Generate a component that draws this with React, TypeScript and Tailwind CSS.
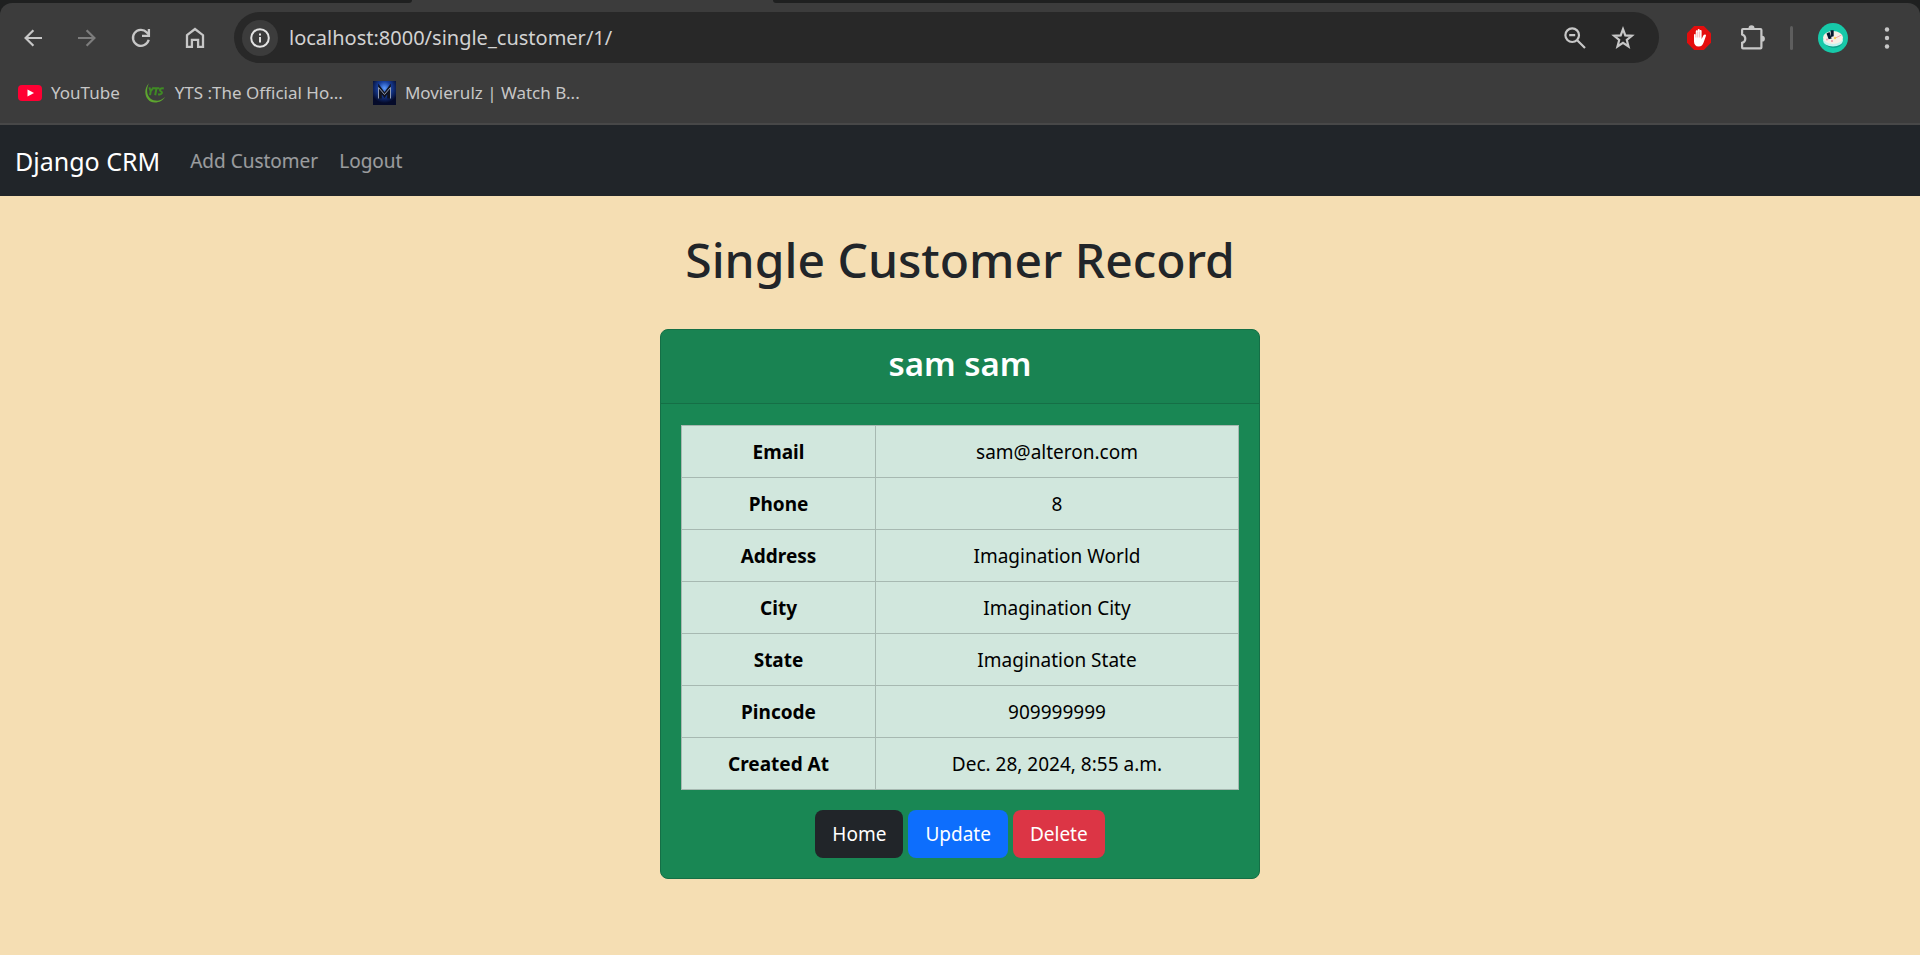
import type { ReactNode } from "react";

const record = [
  { label: "Email", value: "sam@alteron.com" },
  { label: "Phone", value: "8" },
  { label: "Address", value: "Imagination World" },
  { label: "City", value: "Imagination City" },
  { label: "State", value: "Imagination State" },
  { label: "Pincode", value: "909999999" },
  { label: "Created At", value: "Dec. 28, 2024, 8:55 a.m." },
];

function IconButton({ label, children }: { label: string; children: ReactNode }) {
  return (
    <button type="button" aria-label={label} className="flex size-9 shrink-0 items-center justify-center rounded-full">
      {children}
    </button>
  );
}

function BackIcon() {
  return (
    <svg viewBox="0 0 18 18" className="size-[18px]" fill="none" stroke="#c7c7c7" strokeWidth="2.2">
      <path d="M18 9H2M9.4 1.2 1.6 9l7.8 7.8" />
    </svg>
  );
}

function ForwardIcon() {
  return (
    <svg viewBox="0 0 18 18" className="size-[18px]" fill="none" stroke="#7d7d7d" strokeWidth="2.2">
      <path d="M0 9h16M8.600 1.200 16.400 9l-7.800 7.800" />
    </svg>
  );
}

function ReloadIcon() {
  return (
    <svg viewBox="0 0 20 20" className="size-5" fill="none" stroke="#c7c7c7" strokeWidth="2.300">
      <path d="M17.700 11.800A8 8 0 1 1 15.800 4.400L18 6.600" />
      <path d="M17.900 1v6.900H11" />
    </svg>
  );
}

function HomeIcon() {
  return (
    <svg viewBox="0 0 20 22" className="h-[22px] w-5" fill="none" stroke="#c7c7c7" strokeWidth="2.300">
      <path d="M2 8.200 10 2l8 6.200v11.700h-4.900v-7.100H6.900v7.100H2z" />
    </svg>
  );
}

function InfoIcon() {
  return (
    <svg viewBox="0 0 20 20" className="size-5" fill="none" stroke="#e3e3e3" strokeWidth="2">
      <circle cx="10" cy="10" r="8.800" />
      <path d="M10 9v5.400M10 5.400v2" />
    </svg>
  );
}

function ZoomOutIcon() {
  return (
    <svg viewBox="0 0 22 22" className="size-[22px]" fill="none" stroke="#c7c7c7" strokeWidth="2.200">
      <circle cx="8.200" cy="8.200" r="6.800" />
      <path d="M5.200 8.200h6M13.200 13.200l7.800 7.800" />
    </svg>
  );
}

function StarIcon() {
  return (
    <svg viewBox="0 0 24 24" className="size-6" fill="none" stroke="#c7c7c7" strokeWidth="2.200">
      <path d="m12 3.200 2.300 6.200 6.600.4-5.100 4.200 1.700 6.400-5.500-3.600-5.500 3.600L8.200 14 3.100 9.800l6.600-.4z" />
    </svg>
  );
}

function BlockerIcon() {
  return (
    <svg viewBox="0 0 24 24" className="size-6">
      <path d="M7.200 0h9.600L24 7.200v9.600L16.800 24H7.200L0 16.800V7.200z" fill="#e40d0d" />
      <path
        d="M7 9.200c0-1.500 1.800-1.500 1.800 0V5.300c0-1.500 1.900-1.500 1.900 0V4c0-1.500 2-1.500 2 0v1c0-1.400 1.900-1.400 1.900 0v8l1.700-3.500c.8-1.600 3.300-1.300 2.600.5l-2.200 6.200c-.9 2.700-2.300 4.300-5 4.300C8.500 20.500 7 18.400 7 15.500z"
        fill="#fff"
      />
      <path d="M8.850 6.500v5M10.750 5.500v6M12.650 5.500v6" stroke="#ee7070" strokeWidth=".5" />
    </svg>
  );
}

function ExtensionsIcon() {
  return (
    <svg viewBox="0 0 26 26" className="size-[26px]" fill="none" stroke="#c7c7c7" strokeWidth="2.200">
      <path d="M2.100 4.900q0-.9.900-.9h17.500q.9 0 .9.900v17.600q0 .9-.9.900H3q-.9 0-.9-.9v-4.600q3.200-1 3.200-4.200T2.100 9.500z" />
      <path d="M8.500 3.200a3 3 0 0 1 6 0zM22 10.800a2.900 2.900 0 0 1 0 5.800z" fill="#c7c7c7" stroke="none" />
    </svg>
  );
}

function AvatarIcon() {
  return (
    <svg viewBox="0 0 30 30" className="size-[30px]">
      <circle cx="15" cy="15" r="15" fill="#17c9a9" />
      <path d="M6 17c0 9 16 11 19 2z" fill="#0e9c88" />
      <ellipse cx="15" cy="17.500" rx="10" ry="6" fill="#c5f3f0" />
      <ellipse cx="15" cy="14.500" rx="10" ry="6.500" fill="#f7efe6" />
      <path d="m8.500 10.500 3-1.500 2.200 6.500-3 .8z" fill="#07172e" />
      <path d="M12.500 7.200h3.200v6L13 14z" fill="#07172e" />
      <path d="m16.500 15.500 7-3.500" stroke="#f3a6ad" strokeWidth="1" />
      <circle cx="9" cy="16.500" r="1" fill="#f49cb4" />
      <circle cx="17" cy="15" r="1.200" fill="#f8cf5b" />
      <circle cx="14" cy="18" r="1" fill="#f28a9c" />
    </svg>
  );
}

function MenuIcon() {
  return (
    <svg viewBox="0 0 6 22" className="h-[22px] w-1.5" fill="#c7c7c7">
      <circle cx="3" cy="2.500" r="2.200" />
      <circle cx="3" cy="11" r="2.200" />
      <circle cx="3" cy="19.500" r="2.200" />
    </svg>
  );
}

function YouTubeIcon() {
  return (
    <svg viewBox="0 0 24 16" className="h-4 w-6 shrink-0">
      <rect width="24" height="16" rx="4" fill="#ff0033" />
      <path d="m9.500 4.500 6.500 3.500-6.500 3.500z" fill="#fff" />
    </svg>
  );
}

function YtsIcon() {
  return (
    <svg viewBox="0 0 22 22" className="size-[22px] shrink-0">
      <path d="M5 1.200C-2 8 1.500 20.500 11 20.500c4.500 0 8-2.200 10-5.500-3 2.800-6 4-9.500 3.600C3.500 17.800 1 9 5 1.200z" fill="#5da52f" />
      <g fill="none" stroke="#3f8a24" strokeWidth="2">
        <path d="m5.300 5.400 1.400 3.800 3-3.800M6.700 9.200 6 13.200M9.800 6.200h5.600M12.500 6.200 11.200 13.200M19.800 6.400c-3.700-.8-4.800 1.700-2.900 2.900 2.200 1.200.8 3.700-2.800 2.900" />
      </g>
    </svg>
  );
}

function MovieIcon() {
  return (
    <svg viewBox="0 0 23 24" className="h-6 w-[23px] shrink-0">
      <defs>
        <radialGradient id="movie-glow" cx=".5" cy=".3" r=".62">
          <stop offset="0" stopColor="#5c9bff" />
          <stop offset=".45" stopColor="#173f9e" />
          <stop offset="1" stopColor="#050b2a" />
        </radialGradient>
      </defs>
      <rect width="23" height="24" fill="url(#movie-glow)" />
      <path d="M7 17.500V8l4.500 6L16 8v9.500" fill="none" stroke="#11141f" strokeWidth="3.600" />
      <path d="M5.500 17.500v-11l6 7 6-7v11" fill="none" stroke="#8f9ab3" strokeWidth="1" />
    </svg>
  );
}

function Bookmark({ icon, children }: { icon: ReactNode; children: ReactNode }) {
  return (
    <a href="#" className="flex items-center gap-[9px] text-[17px] leading-6 whitespace-nowrap text-[#c7c7c7]">
      {icon}
      {children}
    </a>
  );
}

function BrowserChrome() {
  return (
    <header className="bg-[#1f2020]">
      <div className="flex h-[3px] bg-[#3c3c3c]">
        <div className="w-[412px] rounded-br-lg bg-[#1f2020]" />
        <div className="w-[361px]" />
        <div className="grow rounded-bl-lg bg-[#1f2020]" />
      </div>
      <div className="rounded-t-xl border-b-2 border-[#484848] bg-[#3c3c3c]">
        <div className="flex items-center px-[15px] pt-[9px]">
          <div className="flex gap-[18px]">
            <IconButton label="Back"><BackIcon /></IconButton>
            <IconButton label="Forward"><ForwardIcon /></IconButton>
            <IconButton label="Reload"><ReloadIcon /></IconButton>
            <IconButton label="Home"><HomeIcon /></IconButton>
          </div>
          <div className="ml-[21px] flex h-[51px] grow items-center rounded-full bg-[#282828] pr-[18px] pl-2">
            <button type="button" aria-label="Site information" className="flex size-9 shrink-0 items-center justify-center rounded-full bg-[#3c3c3c]">
              <InfoIcon />
            </button>
            <input
              aria-label="Address"
              defaultValue="localhost:8000/single_customer/1/"
              className="ml-[11px] min-w-0 grow bg-transparent text-xl leading-7 text-[#d2d2d2] outline-none"
            />
            <div className="flex gap-3">
              <IconButton label="Zoom"><ZoomOutIcon /></IconButton>
              <IconButton label="Bookmark this page"><StarIcon /></IconButton>
            </div>
          </div>
          <div className="ml-[22px] flex items-center">
            <div className="flex gap-[18px]">
              <IconButton label="Ad blocker"><BlockerIcon /></IconButton>
              <IconButton label="Extensions"><ExtensionsIcon /></IconButton>
            </div>
            <div className="ml-[19px] h-6 w-[3px] rounded-full bg-[#5e5e5e]" />
            <div className="ml-[22px] flex gap-[18px]">
              <IconButton label="Profile"><AvatarIcon /></IconButton>
              <IconButton label="Menu"><MenuIcon /></IconButton>
            </div>
          </div>
        </div>
        <nav aria-label="Bookmarks" className="flex h-[60px] items-center px-[18px]">
          <Bookmark icon={<YouTubeIcon />}>YouTube</Bookmark>
          <div className="ml-6 flex gap-[30px]">
            <Bookmark icon={<YtsIcon />}>YTS :The Official Ho...</Bookmark>
            <Bookmark icon={<MovieIcon />}>Movierulz | Watch B...</Bookmark>
          </div>
        </nav>
      </div>
    </header>
  );
}

export default function App() {
  return (
    <div className="flex min-h-screen flex-col bg-[#f5deb3] font-['Noto_Sans','Open_Sans',sans-serif] text-[#212529]">
      <BrowserChrome />
      <nav aria-label="Main" className="flex h-[71px] items-center bg-[#212529] px-[15px]">
        <a href="#" className="text-[25px] leading-9 text-white">Django CRM</a>
        <a href="#" className="ml-[30px] text-[19px] leading-7 text-white/55">Add Customer</a>
        <a href="#" className="ml-[21px] text-[19px] leading-7 text-white/55">Logout</a>
      </nav>
      <main className="flex flex-col items-center px-4 pb-10 text-[19px] leading-[30px]">
        <h1 className="mt-[34px] text-5xl leading-[60px] font-medium">Single Customer Record</h1>
        <section className="mt-[39px] w-full max-w-[600px] overflow-hidden rounded-lg border border-[#156f46] bg-[#198754] text-center">
          <h2 className="border-b border-[#156f46] bg-[#212529]/3 pt-4 pb-[21px] text-[33px] leading-9 font-semibold text-white">
            sam sam
          </h2>
          <div className="px-5 pt-[21px] pb-5">
            <table className="w-full border-collapse bg-[#d1e7dd] text-black">
              <tbody>
                {record.map((row) => (
                  <tr key={row.label} className="h-[52px]">
                    <th scope="row" className="w-[194px] border border-[#a7b9b1] font-bold">{row.label}</th>
                    <td className="border border-[#a7b9b1]">{row.value}</td>
                  </tr>
                ))}
              </tbody>
            </table>
            <div className="mt-5 flex justify-center gap-[5px] text-white">
              <a href="#" className="rounded-lg bg-[#212529] px-[17px] py-[9px]">Home</a>
              <a href="#" className="rounded-lg bg-[#0d6efd] px-[17px] py-[9px]">Update</a>
              <a href="#" className="rounded-lg bg-[#dc3545] px-[17px] py-[9px]">Delete</a>
            </div>
          </div>
        </section>
      </main>
    </div>
  );
}
